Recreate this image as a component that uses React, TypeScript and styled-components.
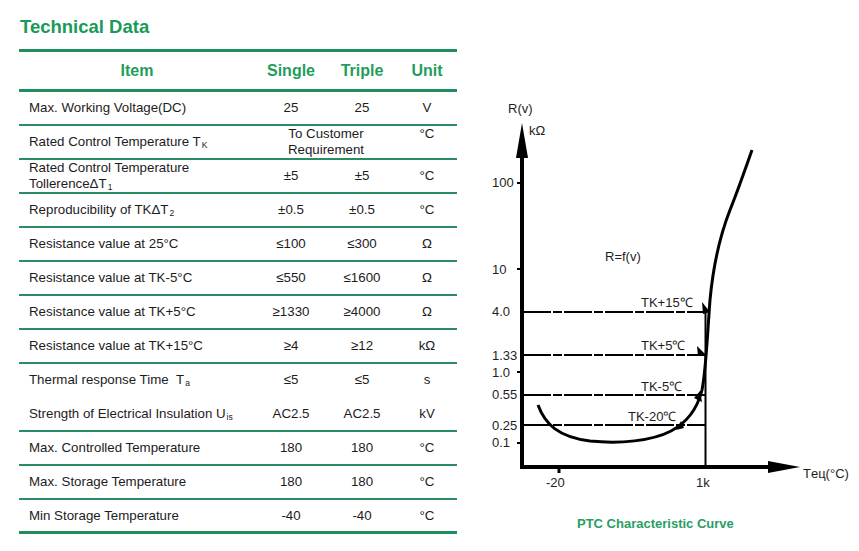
import React from "react";
import styled, { createGlobalStyle } from "styled-components";

const GlobalStyle = createGlobalStyle`
  html, body { margin: 0; padding: 0; background: #ffffff; }
  body { font-family: "Liberation Sans", Arial, sans-serif; color: #1c1c1c; }
`;

const Page = styled.div`
  display: flex;
  align-items: flex-start;
  width: 859px;
  height: 551px;
  overflow: hidden;
`;

const DataSection = styled.section`
  display: flex;
  flex-direction: column;
  width: 438px;
  padding: 17px 0 0 19px;
`;

const Title = styled.h1`
  margin: 0 0 12px 1px;
  font-size: 18.5px;
  line-height: 20px;
  font-weight: bold;
  color: #189a58;
`;

const Table = styled.div`
  display: flex;
  flex-direction: column;
`;

const cols = "236px 72px 70px 60px";

const HeaderRow = styled.div`
  display: grid;
  grid-template-columns: ${cols};
  box-sizing: border-box;
  height: 43px;
  border-top: 3px solid #1d8e5c;
  border-bottom: 3px solid #1d8e5c;
  align-items: center;
`;

const HeadCell = styled.div`
  text-align: center;
  font-size: 16px;
  font-weight: bold;
  color: #1f9d5d;
`;

type Border = "thin" | "none" | "thick";

const Row = styled.div<{ $border: Border }>`
  display: grid;
  grid-template-columns: ${cols};
  box-sizing: border-box;
  height: 34px;
  font-size: 13.3px;
  line-height: 16px;
  border-bottom: ${(p) =>
    p.$border === "thin"
      ? "2px solid #2a8c62"
      : p.$border === "thick"
      ? "3px solid #1d8e5c"
      : "2px solid transparent"};
`;

const ItemCell = styled.div`
  display: flex;
  align-items: center;
  padding-left: 10px;
`;

const ValueCell = styled.div<{ $top?: boolean; $span?: number }>`
  display: flex;
  align-items: ${(p) => (p.$top ? "flex-start" : "center")};
  justify-content: center;
  text-align: center;
  grid-column: span ${(p) => p.$span ?? 1};
`;

const Sub = styled.sub`
  font-size: 8.5px;
  line-height: 0;
  vertical-align: -2px;
  margin-left: 1px;
`;

const ChartSection = styled.section`
  display: flex;
  flex-direction: column;
  margin-left: 23px;
  padding-top: 95px;
`;

const Caption = styled.div`
  margin-top: 21px;
  padding-left: 97px;
  font-size: 13px;
  line-height: 16px;
  font-weight: bold;
  color: #2a9d64;
`;

type RowData = {
  item: React.ReactNode;
  single?: React.ReactNode;
  triple?: React.ReactNode;
  unit: React.ReactNode;
  merged?: React.ReactNode;
  border?: Border;
};

const rows: RowData[] = [
  { item: "Max. Working Voltage(DC)", single: "25", triple: "25", unit: "V" },
  {
    item: (
      <span>
        Rated Control Temperature T<Sub>K</Sub>
      </span>
    ),
    merged: (
      <span>
        To Customer
        <br />
        Requirement
      </span>
    ),
    unit: "°C",
  },
  {
    item: (
      <span>
        Rated Control Temperature
        <br />
        TollerenceΔT<Sub>1</Sub>
      </span>
    ),
    single: "±5",
    triple: "±5",
    unit: "°C",
  },
  {
    item: (
      <span>
        Reproducibility of TKΔT<Sub>2</Sub>
      </span>
    ),
    single: "±0.5",
    triple: "±0.5",
    unit: "°C",
  },
  { item: "Resistance value at 25°C", single: "≤100", triple: "≤300", unit: "Ω" },
  { item: "Resistance value at TK-5°C", single: "≤550", triple: "≤1600", unit: "Ω" },
  { item: "Resistance value at TK+5°C", single: "≥1330", triple: "≥4000", unit: "Ω" },
  { item: "Resistance value at TK+15°C", single: "≥4", triple: "≥12", unit: "kΩ" },
  {
    item: (
      <span>
        Thermal response Time&nbsp;&nbsp;T<Sub>a</Sub>
      </span>
    ),
    single: "≤5",
    triple: "≤5",
    unit: "s",
    border: "none",
  },
  {
    item: (
      <span>
        Strength of Electrical Insulation U<Sub>is</Sub>
      </span>
    ),
    single: "AC2.5",
    triple: "AC2.5",
    unit: "kV",
  },
  { item: "Max. Controlled Temperature", single: "180", triple: "180", unit: "°C" },
  { item: "Max. Storage Temperature", single: "180", triple: "180", unit: "°C" },
  { item: "Min Storage Temperature", single: "-40", triple: "-40", unit: "°C", border: "thick" },
];

const T = (props: { x: number; y: number; children: React.ReactNode }) => (
  <text
    x={props.x}
    y={props.y}
    fontFamily="'Liberation Sans', Arial, sans-serif"
    fontSize={13}
    fill="#1e1e1e"
  >
    {props.children}
  </text>
);

const Chart = () => {
  const dash = "28 2 9 2";
  const levels = [312, 355, 395, 425];
  return (
    <svg width={379} height={400} viewBox="480 95 379 400">
      {/* axes */}
      <line x1={522} y1={150} x2={522} y2={469} stroke="#000" strokeWidth={4} />
      <polygon points="522,123 516,158 528,158" fill="#000" />
      <line x1={520} y1={467} x2={772} y2={467} stroke="#000" strokeWidth={4} />
      <polygon points="800,467 768,461 768,473" fill="#000" />
      {/* ticks */}
      {[183, 269, 372, 443].map((y) => (
        <line key={y} x1={517} y1={y} x2={520} y2={y} stroke="#000" strokeWidth={2} />
      ))}
      <line x1={559} y1={467} x2={559} y2={473} stroke="#000" strokeWidth={3} />
      {/* dashed levels */}
      {levels.map((y) => (
        <line
          key={y}
          x1={523}
          y1={y}
          x2={705}
          y2={y}
          stroke="#000"
          strokeWidth={2}
          strokeDasharray={dash}
        />
      ))}
      <line x1={705.5} y1={311} x2={705.5} y2={467} stroke="#000" strokeWidth={2} />
      {/* curve */}
      <path
        d="M538,405 C545,424 558,437 590,441 C620,444 652,441 671,431 C690,421 698,406 702,390 C706,370 707,340 710,300 C713,268 719,238 730,210 C738,190 745,170 752,150"
        fill="none"
        stroke="#000"
        strokeWidth={3}
      />
      {/* arrow heads */}
      <polygon points="702,302 703,314 710,312" fill="#000" />
      <polygon points="697,346 698,356 706,355" fill="#000" />
      <polygon points="694,398 700,391 702,402" fill="#000" />
      <polygon points="676,430 681,421 684,428" fill="#000" />
      {/* labels */}
      <T x={508} y={113}>R(v)</T>
      <T x={529} y={135}>kΩ</T>
      <T x={492} y={187}>100</T>
      <T x={492} y={274}>10</T>
      <T x={492} y={316}>4.0</T>
      <T x={492} y={360}>1.33</T>
      <T x={492} y={377}>1.0</T>
      <T x={492} y={399}>0.55</T>
      <T x={492} y={430}>0.25</T>
      <T x={492} y={447}>0.1</T>
      <T x={605} y={261}>R=f(v)</T>
      <T x={641} y={307}>TK+15℃</T>
      <T x={641} y={350}>TK+5℃</T>
      <T x={641} y={391}>TK-5℃</T>
      <T x={628} y={421}>TK-20℃</T>
      <T x={546} y={487}>-20</T>
      <T x={696} y={487}>1k</T>
      <T x={803} y={478}>Tец(°C)</T>
    </svg>
  );
};

export default function App() {
  return (
    <>
      <GlobalStyle />
      <Page>
        <DataSection>
          <Title>Technical Data</Title>
          <Table>
            <HeaderRow>
              <HeadCell>Item</HeadCell>
              <HeadCell>Single</HeadCell>
              <HeadCell>Triple</HeadCell>
              <HeadCell>Unit</HeadCell>
            </HeaderRow>
            {rows.map((r, i) => (
              <Row key={i} $border={r.border ?? "thin"}>
                <ItemCell>{r.item}</ItemCell>
                {r.merged ? (
                  <ValueCell $span={2}>{r.merged}</ValueCell>
                ) : (
                  <>
                    <ValueCell>{r.single}</ValueCell>
                    <ValueCell>{r.triple}</ValueCell>
                  </>
                )}
                <ValueCell $top={!!r.merged}>{r.unit}</ValueCell>
              </Row>
            ))}
          </Table>
        </DataSection>
        <ChartSection>
          <Chart />
          <Caption>PTC Characteristic Curve</Caption>
        </ChartSection>
      </Page>
    </>
  );
}
